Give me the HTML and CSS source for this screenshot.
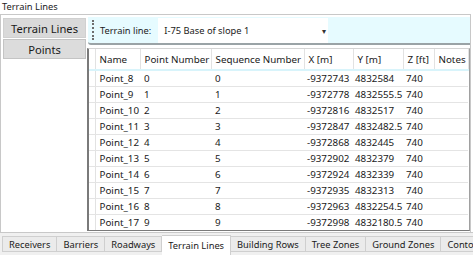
FILE: index.html
```html
<!DOCTYPE html>
<html lang="en">
<head>
    <meta charset="UTF-8" />
    <title>Terrain Lines</title>
    <link rel="stylesheet" href="styles.css">
</head>
<body>
    <div class="window">
        <div class="title">Terrain Lines</div>

        <div class="page">
            <div class="side">
                <div class="vtab active">Terrain Lines</div>
                <div class="vtab">Points</div>
            </div>

            <div class="content">
                <div class="toolbar">
                    <span class="grip"></span>
                    <span class="label">Terrain line:</span>
                    <div class="combo">
                        <span class="combo-text">I-75 Base of slope 1</span>
                        <span class="combo-arrow">&#9662;</span>
                    </div>
                </div>

                <div class="grid">
                    <table>
                        <colgroup>
                            <col class="c-rh">
                            <col class="c-name">
                            <col class="c-pn">
                            <col class="c-sn">
                            <col class="c-x">
                            <col class="c-y">
                            <col class="c-z">
                            <col class="c-notes">
                        </colgroup>
                        <thead>
                            <tr>
                                <th class="rh"></th>
                                <th>Name</th>
                                <th>Point Number</th>
                                <th>Sequence Number</th>
                                <th>X [m]</th>
                                <th>Y [m]</th>
                                <th>Z [ft]</th>
                                <th>Notes</th>
                            </tr>
                        </thead>
                        <tbody id="rows"></tbody>
                    </table>
                </div>
            </div>
        </div>

        <div class="tabs">
            <div class="tab">Receivers</div>
            <div class="tab">Barriers</div>
            <div class="tab">Roadways</div>
            <div class="tab selected">Terrain Lines</div>
            <div class="tab">Building Rows</div>
            <div class="tab">Tree Zones</div>
            <div class="tab">Ground Zones</div>
            <div class="tab">Contours</div>
        </div>
    </div>

    <script>
        const points = [
            ["Point_8", 0, 0, "-9372743", "4832584", 740],
            ["Point_9", 1, 1, "-9372778", "4832555.5", 740],
            ["Point_10", 2, 2, "-9372816", "4832517", 740],
            ["Point_11", 3, 3, "-9372847", "4832482.5", 740],
            ["Point_12", 4, 4, "-9372868", "4832445", 740],
            ["Point_13", 5, 5, "-9372902", "4832379", 740],
            ["Point_14", 6, 6, "-9372924", "4832339", 740],
            ["Point_15", 7, 7, "-9372935", "4832313", 740],
            ["Point_16", 8, 8, "-9372963", "4832254.5", 740],
            ["Point_17", 9, 9, "-9372998", "4832180.5", 740]
        ];

        const tbody = document.getElementById("rows");
        points.forEach((p) => {
            const tr = document.createElement("tr");
            tr.innerHTML = `
                <td class="rh"></td>
                <td>${p[0]}</td>
                <td>${p[1]}</td>
                <td>${p[2]}</td>
                <td>${p[3]}</td>
                <td>${p[4]}</td>
                <td>${p[5]}</td>
                <td></td>
            `;
            tbody.appendChild(tr);
        });
    </script>
</body>
</html>
```

FILE: styles.css
```css
body {
    margin: 0;
    padding: 0;
    background-color: #ffffff;
    font-family: 'Noto Sans', 'Open Sans', sans-serif;
    color: #1a1a1a;
}

.window {
    width: 473px;
    height: 255px;
    overflow: hidden;
    display: flex;
    flex-direction: column;
}

.title {
    height: 14px;
    line-height: 13px;
    font-size: 9.3px;
    padding-left: 2px;
}

.page {
    width: 471px;
    height: 218px;
    box-sizing: border-box;
    border: 1px solid #c8c8c8;
    border-bottom: none;
    display: flex;
}

.side {
    width: 86px;
    padding: 3px 1px 0 2px;
    box-sizing: border-box;
    display: flex;
    flex-direction: column;
    gap: 1px;
}

.vtab {
    height: 20px;
    line-height: 19px;
    text-align: center;
    font-size: 11.2px;
    background-color: #dcdcdc;
    border: 1px solid #c4c4c4;
    box-sizing: border-box;
}

.vtab.active {
    background-color: #d9d9d9;
    border-color: #d0d0d0;
}

.content {
    flex: 1;
    display: flex;
    flex-direction: column;
}

.toolbar {
    height: 28px;
    margin: 2px 0 0 1px;
    box-sizing: border-box;
    background-color: #e6fbff;
    border-bottom: 2px solid #9aa3a6;
    border-bottom-left-radius: 3px;
    display: flex;
    align-items: center;
    font-size: 9.3px;
}

.grip {
    width: 0;
    height: 20px;
    margin-left: 4px;
    border-left: 2px dotted #6e6e6e;
}

.label {
    margin-left: 6px;
}

.combo {
    width: 170px;
    height: 25px;
    margin-left: 7px;
    margin-top: 1px;
    background-color: #ffffff;
    display: flex;
    align-items: center;
    justify-content: space-between;
    box-sizing: border-box;
    padding: 0 2px 0 6px;
}

.combo-arrow {
    font-size: 8px;
    color: #333;
}

.grid {
    height: 183px;
    margin-top: 3px;
    box-sizing: border-box;
    border-top: 1px solid #d4d4d4;
    border-left: 2px solid #7a7a7a;
    border-right: 1px solid #a0a0a0;
    border-bottom: 1px solid #7a7a7a;
    overflow: hidden;
}

table {
    border-collapse: collapse;
    table-layout: fixed;
    width: 379px;
    font-size: 9.8px;
}

.c-rh { width: 6px; }
.c-name { width: 45px; }
.c-pn { width: 71px; }
.c-sn { width: 93px; }
.c-x { width: 49px; }
.c-y { width: 50px; }
.c-z { width: 31px; }
.c-notes { width: 34px; }

th {
    height: 21px;
    box-sizing: border-box;
    padding: 0 0 0 4px;
    font-weight: normal;
    text-align: left;
    white-space: nowrap;
    overflow: hidden;
    border-right: 1px solid #e2e2e2;
    border-bottom: 2px solid #d8f4fb;
}

td {
    height: 16px;
    box-sizing: border-box;
    padding: 0 0 0 4px;
    line-height: 15px;
    white-space: nowrap;
    overflow: hidden;
    border-bottom: 1px solid #e4e4e4;
}

td:nth-child(5) { padding-left: 3px; }
td:nth-child(6) { padding-left: 2px; }
td:nth-child(7) { padding-left: 3px; }

.rh {
    padding: 0;
    border-right: 1px solid #e2e2e2;
}

.tabs {
    flex: 1;
    background-color: #f0f0f0;
    border-top: 1px solid #c8c8c8;
    display: flex;
    align-items: flex-end;
    padding-left: 2px;
    font-size: 9.3px;
}

.tab {
    height: 16px;
    line-height: 15px;
    margin-bottom: 3px;
    padding: 0 6px;
    white-space: nowrap;
    flex-shrink: 0;
    background-color: #ebebeb;
    border: 1px solid #cfcfcf;
    border-left: none;
    box-sizing: border-box;
}

.tab:first-child {
    border-left: 1px solid #cfcfcf;
}

.tab.selected {
    height: 20px;
    line-height: 19px;
    margin-bottom: 0;
    background-color: #ffffff;
    border-bottom: none;
}
```
